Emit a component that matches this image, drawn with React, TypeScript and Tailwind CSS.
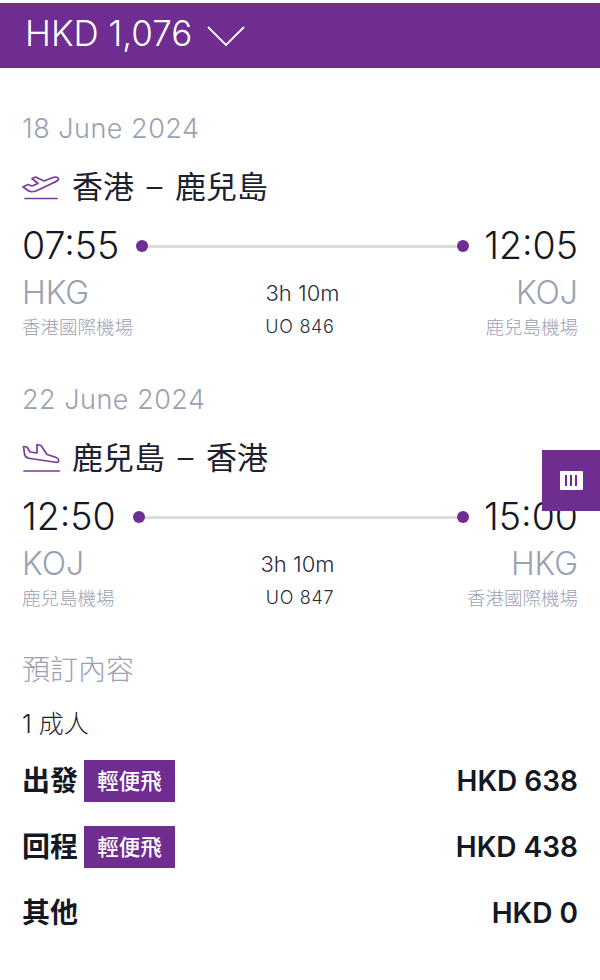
const font = "font-['Inter','Noto_Sans_CJK_TC',sans-serif]";

function TakeoffIcon() {
  return (
    <svg width="38" height="30" viewBox="0 0 38 30" fill="none" stroke="#7a3a9e" strokeWidth="1.7" strokeLinejoin="round" strokeLinecap="round">
      <path d="M1 15 L6 12.5 L10 14 L16 11.5 L10 6.5 L13.5 5 L22 9 L31 5.5 C34 4.5 36.5 5.5 36.5 7 C36.5 8.5 34 9.5 32 10.5 L14 19 C11 20 8 20 6 18.5 Z" />
      <path d="M3 26.5 H35" />
    </svg>
  );
}

function LandingIcon() {
  return (
    <svg width="38" height="30" viewBox="0 0 38 30" fill="none" stroke="#7a3a9e" strokeWidth="1.7" strokeLinejoin="round" strokeLinecap="round">
      <path d="M1.5 3.5 L5 4 L8 9 L15 10 L15 1.5 L19 2.5 L25 11.5 L33 14 C36 15 37 17 36.5 18.5 C36 19.5 34 19.5 32 19 L8 15.5 C5 15 3 14 2.5 11 Z" />
      <path d="M2 28 H38" />
    </svg>
  );
}

interface FlightProps {
  date: string;
  route: string[];
  landing?: boolean;
  depart: string;
  arrive: string;
  from: string;
  to: string;
  fromName: string;
  toName: string;
  duration: string;
  flightNo: string;
  durationClass: string;
}

function Flight(p: FlightProps) {
  return (
    <section>
      <p className="text-[27px] leading-[32px] font-light tracking-[0.5px] text-[#9aa1b1]">{p.date}</p>
      <div className="mt-[26px] flex h-[32px] items-center">
        {p.landing ? <LandingIcon /> : <TakeoffIcon />}
        <p className="ml-[12px] text-[31px] leading-[32px] text-[#1c2130]">
          {p.route[0]} <span className="mx-[4px] font-light">–</span> {p.route[1]}
        </p>
      </div>
      <div className="mt-[23px] flex h-[40px] items-center">
        <span className="text-[37.5px] leading-[40px] font-light text-[#141824]">{p.depart}</span>
        <div className="relative mr-[21px] ml-[22px] h-[3px] flex-1 bg-[#dcdcdf]">
          <span className="absolute top-[-5px] left-[-5px] h-[12px] w-[12px] rounded-full bg-[#6f2c91]" />
          <span className="absolute top-[-5px] right-[-6px] h-[12px] w-[12px] rounded-full bg-[#6f2c91]" />
        </div>
        <span className="text-[37.5px] leading-[40px] font-light text-[#141824]">{p.arrive}</span>
      </div>
      <div className="mt-[8px] grid grid-cols-[1fr_auto_1fr]">
        <div>
          <p className="text-[32px] leading-[38px] font-light text-[#9aa1b1]">{p.from}</p>
          <p className="mt-[2px] text-[18.5px] leading-[26px] font-light text-[#9aa1b1]">{p.fromName}</p>
        </div>
        <div className="text-center">
          <p className={`pt-[4px] text-[22px] leading-[30px] font-light text-[#2a2e3a] ${p.durationClass}`}>{p.duration}</p>
          <p className="mt-[6px] text-[18px] leading-[26px] font-light tracking-[0.7px] text-[#2a2e3a]">{p.flightNo}</p>
        </div>
        <div className="text-right">
          <p className="text-[32px] leading-[38px] font-light text-[#9aa1b1]">{p.to}</p>
          <p className="mt-[2px] text-[18.5px] leading-[26px] font-light text-[#9aa1b1]">{p.toName}</p>
        </div>
      </div>
    </section>
  );
}

function PriceRow({ label, fare, price }: { label: string; fare?: string; price: string }) {
  return (
    <div className="flex h-[42px] items-center">
      <span className="text-[28px] font-bold text-[#141824]">{label}</span>
      {fare && (
        <span className="ml-[6px] flex h-[42px] w-[91px] items-center justify-center bg-[#6f2c91] text-[21.5px] font-medium text-white">
          {fare}
        </span>
      )}
      <span className="ml-auto text-[28px] font-semibold text-[#141824]">{price}</span>
    </div>
  );
}

export default function App() {
  return (
    <div className={`relative h-[980px] w-[600px] overflow-hidden bg-white ${font}`}>
      <header className="mt-[3px] flex h-[65px] items-center bg-[#6f2c91] pb-[4px] pl-[25px] text-white">
        <span className="text-[35px] leading-none font-light">HKD 1,076</span>
        <svg className="mt-[5px] ml-[15px]" width="38" height="21" viewBox="0 0 38 21" fill="none" stroke="white" strokeWidth="1.8">
          <path d="M1 1 L19 19 L37 1" />
        </svg>
      </header>

      <main className="px-[22px] pt-[45px]">
        <Flight
          date="18 June 2024"
          route={["香港", "鹿兒島"]}
          depart="07:55"
          arrive="12:05"
          from="HKG"
          to="KOJ"
          fromName="香港國際機場"
          toName="鹿兒島機場"
          duration="3h 10m"
          flightNo="UO 846"
          durationClass="pl-[5px]"
        />
        <div className="h-[44px]" />
        <Flight
          landing
          date="22 June 2024"
          route={["鹿兒島", "香港"]}
          depart="12:50"
          arrive="15:00"
          from="KOJ"
          to="HKG"
          fromName="鹿兒島機場"
          toName="香港國際機場"
          duration="3h 10m"
          flightNo="UO 847"
          durationClass="pr-[5px]"
        />

        <p className="mt-[42px] text-[28px] leading-[34px] font-light text-[#9aa1b1]">預訂內容</p>
        <p className="mt-[22px] text-[25px] leading-[30px] font-light text-[#1c2130]">1 成人</p>
        <div className="mt-[21px] flex flex-col gap-[24px]">
          <PriceRow label="出發" fare="輕便飛" price="HKD 638" />
          <PriceRow label="回程" fare="輕便飛" price="HKD 438" />
          <PriceRow label="其他" price="HKD 0" />
        </div>
      </main>

      <button className="absolute top-[450px] right-0 flex h-[61px] w-[58px] items-center justify-center bg-[#6f2c91]">
        <span className="flex h-[19px] w-[23px] items-center justify-center gap-[3px] rounded-[1px] bg-white">
          <i className="h-[11px] w-[2px] bg-[#6f2c91]" />
          <i className="h-[11px] w-[2px] bg-[#6f2c91]" />
          <i className="h-[11px] w-[2px] bg-[#6f2c91]" />
        </span>
      </button>
    </div>
  );
}
